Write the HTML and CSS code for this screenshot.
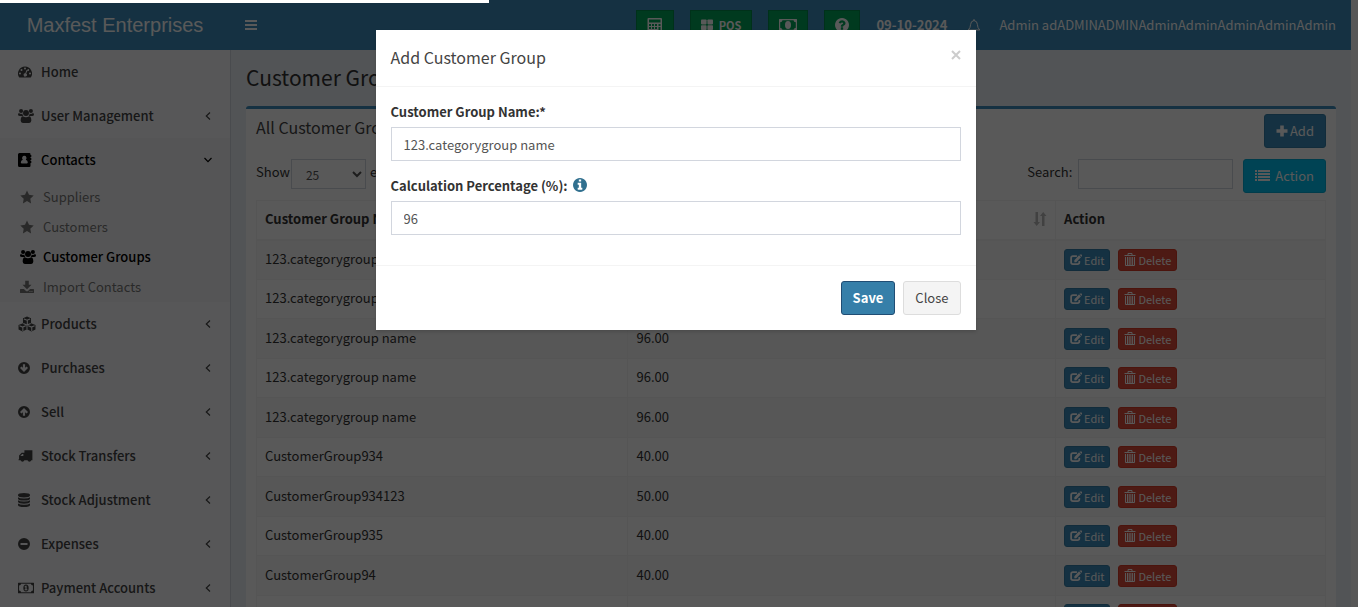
FILE: index.html
```html
<!DOCTYPE html>
<html lang="en">
<head>
<meta charset="utf-8">
<title>Customer Groups - Maxfest Enterprises</title>
<link rel="stylesheet" href="styles.css">
</head>
<body>
<svg class="sprite" aria-hidden="true">
  <symbol id="i-bars" viewBox="0 0 14 14"><path d="M1 2h12v2H1zM1 6h12v2H1zM1 10h12v2H1z"/></symbol>
  <symbol id="i-calc" viewBox="0 0 16 16"><path fill-rule="evenodd" d="M1.500 1h12.500q1 0 1 1v13q0 1-1 1H1.500q-1 0-1-1V2q0-1 1-1zM2 2.500v3h11.500v-3zM2 7v2h2V7zM5 7v2h2V7zM8 7v2h2V7zM11.500 7v2h2V7zM2 10v2h2v-2zM5 10v2h2v-2zM8 10v2h2v-2zM11.500 10v4.500h2V10zM2 13v1.500h2V13zM5 13v1.500h2V13zM8 13v1.500h2V13z"/></symbol>
  <symbol id="i-grid" viewBox="0 0 12 12"><rect y=".5" width="5.600" height="4.900" rx=".8"/><rect x="6.400" y=".5" width="5.600" height="4.900" rx=".8"/><rect y="6.200" width="5.600" height="4.900" rx=".8"/><rect x="6.400" y="6.200" width="5.600" height="4.900" rx=".8"/></symbol>
  <symbol id="i-money" viewBox="0 0 18 14"><path fill-rule="evenodd" d="M.5 1h17q.5 0 .5.500v11q0 .5-.5.500H.5q-.5 0-.5-.5v-11Q0 1 .5 1zM3.500 2.200Q3.300 4 1.200 4.300v5.400q2.100.3 2.300 2.100h11q.2-1.800 2.300-2.100V4.300q-2.100-.3-2.300-2.100z"/><ellipse cx="9" cy="7" rx="3" ry="4"/><path class="cut" d="M8.400 4.500h1.300V8.400h.8v1H7.500v-1h.8V6.200h-.9v-.8q.8-.2 1-.9z"/></symbol>
  <symbol id="i-question" viewBox="128 128 1536 1536"><path d="M1024 1376v-192q0-14-9-23t-23-9h-192q-14 0-23 9t-9 23v192q0 14 9 23t23 9h192q14 0 23-9t9-23zm256-672q0-88-55.500-163t-138.500-116-170-41q-243 0-371 213-15 24 8 42l132 100q7 6 19 6 16 0 25-12 53-68 86-92 34-24 86-24 48 0 85.500 26t37.500 59q0 38-20 61t-68 45q-63 28-115.500 86.500t-52.500 125.500v36q0 14 9 23t23 9h192q14 0 23-9t9-23q0-19 21.500-49.500t54.500-49.500q32-18 49-28.500t46-35 44.500-48 28-60.500 12.500-81zm384 192q0 209-103 385.500t-279.500 279.500-385.500 103-385.500-103-279.500-279.500-103-385.500 103-385.500 279.500-279.500 385.500-103 385.500 103 279.500 279.500 103 385.500z"/></symbol>
  <symbol id="i-info" viewBox="128 128 1536 1536"><path d="M1152 1376v-160q0-14-9-23t-23-9h-96v-512q0-14-9-23t-23-9h-320q-14 0-23 9t-9 23v160q0 14 9 23t23 9h96v320h-96q-14 0-23 9t-9 23v160q0 14 9 23t23 9h448q14 0 23-9t9-23zm-128-896v-160q0-14-9-23t-23-9h-192q-14 0-23 9t-9 23v160q0 14 9 23t23 9h192q14 0 23-9t9-23zm640 416q0 209-103 385.500t-279.500 279.500-385.500 103-385.500-103-279.500-279.500-103-385.500 103-385.500 279.500-279.500 385.500-103 385.500 103 279.500 279.500 103 385.500z"/></symbol>
  <symbol id="i-bell" viewBox="0 0 14 14"><path fill="none" stroke="currentColor" d="M7 1.500Q3.700 2 3.600 5.500 3.500 9 1.200 11h11.600Q10.500 9 10.400 5.500 10.300 2 7 1.500zM5.500 11.500Q5.800 13 7 13t1.500-1.500M7 0v2"/></symbol>
  <symbol id="i-dash" viewBox="0 0 14 14"><path fill-rule="evenodd" d="M7 1.500a7 7 0 0 1 5.900 10.800q-.2.200-.5.200H1.600q-.3 0-.5-.2A7 7 0 0 1 7 1.500zM2 7.500a1 1 0 1 0 0 2 1 1 0 0 0 0-2zM3.500 4a1 1 0 1 0 0 2 1 1 0 0 0 0-2zM7 2.500a1 1 0 1 0 0 2 1 1 0 0 0 0-2zM12 7.500a1 1 0 1 0 0 2 1 1 0 0 0 0-2zM10.300 4a1 1 0 0 0-.8 1.300L8.500 5 7.300 8.300a1.600 1.600 0 1 0 .9.300L9.500 5.800a1 1 0 1 0 .8-1.800z"/></symbol>
  <symbol id="i-users" viewBox="0 0 15 14"><circle cx="2.900" cy="2.400" r="1.900"/><circle cx="12.100" cy="2.400" r="1.900"/><circle cx="7.500" cy="4.200" r="2.800"/><path d="M1.300 4.500q1.600 1 2.800.2Q4.200 6.200 5 7H2Q0 7 0 5.500 0 4 1.300 4.500zM13.700 4.500q-1.600 1-2.800.2Q10.800 6.200 10 7h3q2 0 2-1.500 0-1.500-1.300-1zM4.500 7.200q3 1.800 6 0 2 .2 2 4 0 2.300-2 2.300h-6q-2 0-2-2.300 0-3.800 2-4z"/></symbol>
  <symbol id="i-book" viewBox="0 0 14 14"><path fill-rule="evenodd" d="M1.500 0h9.800q1.200 0 1.200 1.200V2h.8v2h-.8v1h.8v2h-.8v1h.8v2h-.8v2.800q0 1.200-1.200 1.200H1.500Q0 14 0 12.500v-11Q0 0 1.500 0zM6.300 2.800a2.200 2.300 0 0 0-1.500 4Q2.800 7.200 2.800 9.600q0 .8.800.8h5.400q.8 0 .8-.8 0-2.400-2-2.800a2.200 2.300 0 0 0-1.500-4z"/></symbol>
  <symbol id="i-star" viewBox="0 0 14 14"><path d="M7 .5l2 4.300 4.700.6-3.400 3.300.8 4.700L7 11.100l-4.100 2.300.8-4.700L.3 5.400 5 4.800z"/></symbol>
  <symbol id="i-download" viewBox="0 0 14 14"><path fill-rule="evenodd" d="M5.200.8h3.600v4h2.700L7 9.300 2.500 4.800h2.700zM.6 9h3.300L5.700 10.800q1.300 1 2.600 0L10.100 9h3.300q.6 0 .6.600v2.800q0 .6-.6.600H.6q-.6 0-.6-.6V9.600Q0 9 .6 9zM9.500 11v.9h.9V11zM11.500 11v.9h.9V11z"/></symbol>
  <symbol id="i-cubes" viewBox="0 0 17 14"><path d="M8.500 0l3.800 1.500v4.700L16.500 8v4.200L12.700 14 8.500 12 4.300 14 .5 12.200V8l4.200-1.800V1.500z"/><path class="cutline" d="M5.600 2.300l2.900 1.200 2.900-1.200M8.800 3.700v3.500M1.400 8.600l2.900 1.300 3-1.300M4.600 10v3.500M9.700 8.600l3 1.300 3-1.300M13 10v3.500M5 6.500l3.500 1.500L12 6.500M8.500 8v4"/></symbol>
  <symbol id="i-down" viewBox="0 0 14 14"><path fill-rule="evenodd" d="M6 1a6 6 0 1 1 0 12A6 6 0 0 1 6 1zM4.900 3.300v3.500L3.400 5.400 2 6.900l4 4 4-4-1.400-1.500-1.500 1.400V3.300z"/></symbol>
  <symbol id="i-up" viewBox="0 0 14 14"><path fill-rule="evenodd" d="M6 1a6 6 0 1 1 0 12A6 6 0 0 1 6 1zM4.900 10.700h2.200V7.200l1.500 1.400L10 7.100l-4-4-4 4 1.400 1.500 1.500-1.400z"/></symbol>
  <symbol id="i-minus" viewBox="0 0 14 14"><path fill-rule="evenodd" d="M6 1a6 6 0 1 1 0 12A6 6 0 0 1 6 1zM2.500 6v2h7V6z"/></symbol>
  <symbol id="i-truck" viewBox="0 0 15 14"><path fill-rule="evenodd" d="M6 1.500h7.500V11H12.500a1.900 1.900 0 0 1-3.600 0H6a1.900 1.900 0 0 1-3.600 0H.5v-.8l.5-.4V6.500L3.500 4H6zM2.200 7H5V5.200H3.900z"/></symbol>
  <symbol id="i-db" viewBox="0 0 14 14"><path d="M0 1.900Q.2 0 6 0t6 1.900v.7Q11.800 4.500 6 4.500T0 2.600zM0 4.200q1.500 1.300 6 1.300t6-1.300v1.500Q11.800 7.600 6 7.600T0 5.700zM0 7.300q1.500 1.300 6 1.300t6-1.300v1.500q-.2 1.900-6 1.900T0 8.800zM0 10.400q1.500 1.300 6 1.300t6-1.300v1.500Q11.800 14 6 14t-6-2.100z"/></symbol>
  <symbol id="i-left" viewBox="0 0 10 14"><path fill="none" stroke="currentColor" stroke-width="1.200" d="M7 3.500L3.300 7 7 10.500"/></symbol>
  <symbol id="i-chev" viewBox="0 0 10 14"><path fill="none" stroke="currentColor" stroke-width="1.200" d="M1.500 5L5 8.700 8.500 5"/></symbol>
  <symbol id="i-plus" viewBox="0 0 12 12"><path d="M4.200.5h3.600v3.700h3.700v3.600H7.800v3.700H4.200V7.800H.5V4.200h3.700z"/></symbol>
  <symbol id="i-list" viewBox="0 0 16 16"><path d="M0 2h2v2H0zM3 2h12v2H3zM0 5h2v2H0zM3 5h12v2H3zM0 8h2v2H0zM3 8h12v2H3zM0 11h2v2H0zM3 11h12v2H3z"/></symbol>
  <symbol id="i-sort" viewBox="0 0 14 14"><path d="M2.500 0h2.500v10h2l-3.300 4L.5 10h2zM9 14h2.500V4h2l-3.300-4L7 4h2z"/></symbol>
  <symbol id="i-edit" viewBox="0 0 13 12"><path fill="none" stroke="currentColor" stroke-width="1.900" d="M7.500 1.800H3.200Q1.200 1.800 1.200 3.800v4.700q0 2 2 2h4.900q2 0 2-2V7.200"/><path d="M4.700 8.500V6.200L9.800.9l2.100 2.100-5.200 5.500zM10.300.4l.4-.4h1.800l.5.600v1.300l-.6.600z"/></symbol>
  <symbol id="i-trash" viewBox="0 0 12 14"><path fill="none" stroke="currentColor" d="M.5 2.500h11M4 2.500v-2h4v2M1.500 4v8.500h9V4M3.500 4v8M5.200 4v8M6.900 4v8M8.600 4v8"/></symbol>
</svg>

<div class="page">
  <header class="topbar">
    <a class="brand" href="#">Maxfest Enterprises</a>
    <button class="toggle" aria-label="Toggle navigation"><svg class="ic"><use href="#i-bars"/></svg></button>
    <nav class="tools">
      <button class="tool" aria-label="Calculator"><svg class="ic16"><use href="#i-calc"/></svg></button>
      <button class="tool"><svg class="ic12"><use href="#i-grid"/></svg><span>POS</span></button>
      <button class="tool" aria-label="Today's profit"><svg class="ic18"><use href="#i-money"/></svg></button>
      <button class="tool" aria-label="Help"><svg class="ic"><use href="#i-question"/></svg></button>
      <strong class="date">09-10-2024</strong>
      <a class="bell" href="#" aria-label="Notifications"><svg class="ic"><use href="#i-bell"/></svg></a>
      <a class="user" href="#">Admin adADMINADMINAdminAdminAdminAdminAdmin</a>
    </nav>
  </header>

  <div class="main">
    <aside class="sidebar">
      <ul class="menu">
        <li><a class="item" href="#"><svg class="ic"><use href="#i-dash"/></svg>Home</a></li>
        <li><a class="item" href="#"><svg class="ic16"><use href="#i-users"/></svg>User Management<svg class="arrow"><use href="#i-left"/></svg></a></li>
        <li class="active"><a class="item" href="#"><svg class="ic"><use href="#i-book"/></svg>Contacts<svg class="arrow"><use href="#i-chev"/></svg></a>
          <ul class="submenu">
            <li><a href="#"><svg class="ic"><use href="#i-star"/></svg>Suppliers</a></li>
            <li><a href="#"><svg class="ic"><use href="#i-star"/></svg>Customers</a></li>
            <li><a class="current" href="#"><svg class="ic16"><use href="#i-users"/></svg>Customer Groups</a></li>
            <li><a href="#"><svg class="ic"><use href="#i-download"/></svg>Import Contacts</a></li>
          </ul>
        </li>
        <li><a class="item" href="#"><svg class="ic18"><use href="#i-cubes"/></svg>Products<svg class="arrow"><use href="#i-left"/></svg></a></li>
        <li><a class="item" href="#"><svg class="ic"><use href="#i-down"/></svg>Purchases<svg class="arrow"><use href="#i-left"/></svg></a></li>
        <li><a class="item" href="#"><svg class="ic"><use href="#i-up"/></svg>Sell<svg class="arrow"><use href="#i-left"/></svg></a></li>
        <li><a class="item" href="#"><svg class="ic16"><use href="#i-truck"/></svg>Stock Transfers<svg class="arrow"><use href="#i-left"/></svg></a></li>
        <li><a class="item" href="#"><svg class="ic"><use href="#i-db"/></svg>Stock Adjustment<svg class="arrow"><use href="#i-left"/></svg></a></li>
        <li><a class="item" href="#"><svg class="ic"><use href="#i-minus"/></svg>Expenses<svg class="arrow"><use href="#i-left"/></svg></a></li>
        <li><a class="item" href="#"><svg class="ic16"><use href="#i-money"/></svg>Payment Accounts<svg class="arrow"><use href="#i-left"/></svg></a></li>
      </ul>
    </aside>

    <main class="content">
      <h1>Customer Groups</h1>
      <section class="box">
        <div class="box-head">
          <h2>All Customer Groups</h2>
          <button class="btn primary"><svg class="ic12"><use href="#i-plus"/></svg>Add</button>
        </div>
        <div class="filters">
          <label class="show">Show <select><option>25</option><option>50</option></select> entries</label>
          <label class="search">Search: <input type="search"></label>
          <button class="btn cyan"><svg class="ic16"><use href="#i-list"/></svg>Action</button>
        </div>
        <table class="grid">
          <colgroup><col class="c-name"><col class="c-pct"><col class="c-act"></colgroup>
          <thead><tr><th>Customer Group Name</th><th><div class="th">Calculation Percentage (%)<svg class="ic"><use href="#i-sort"/></svg></div></th><th>Action</th></tr></thead>
          <tbody>
            <tr><td>123.categorygroup name</td><td>96.00</td><td><div class="acts"><button class="xs primary"><svg class="ic12"><use href="#i-edit"/></svg>Edit</button><button class="xs danger"><svg class="trash"><use href="#i-trash"/></svg>Delete</button></div></td></tr>
            <tr><td>123.categorygroup name</td><td>96.00</td><td><div class="acts"><button class="xs primary"><svg class="ic12"><use href="#i-edit"/></svg>Edit</button><button class="xs danger"><svg class="trash"><use href="#i-trash"/></svg>Delete</button></div></td></tr>
            <tr><td>123.categorygroup name</td><td>96.00</td><td><div class="acts"><button class="xs primary"><svg class="ic12"><use href="#i-edit"/></svg>Edit</button><button class="xs danger"><svg class="trash"><use href="#i-trash"/></svg>Delete</button></div></td></tr>
            <tr><td>123.categorygroup name</td><td>96.00</td><td><div class="acts"><button class="xs primary"><svg class="ic12"><use href="#i-edit"/></svg>Edit</button><button class="xs danger"><svg class="trash"><use href="#i-trash"/></svg>Delete</button></div></td></tr>
            <tr><td>123.categorygroup name</td><td>96.00</td><td><div class="acts"><button class="xs primary"><svg class="ic12"><use href="#i-edit"/></svg>Edit</button><button class="xs danger"><svg class="trash"><use href="#i-trash"/></svg>Delete</button></div></td></tr>
            <tr><td>CustomerGroup934</td><td>40.00</td><td><div class="acts"><button class="xs primary"><svg class="ic12"><use href="#i-edit"/></svg>Edit</button><button class="xs danger"><svg class="trash"><use href="#i-trash"/></svg>Delete</button></div></td></tr>
            <tr><td>CustomerGroup934123</td><td>50.00</td><td><div class="acts"><button class="xs primary"><svg class="ic12"><use href="#i-edit"/></svg>Edit</button><button class="xs danger"><svg class="trash"><use href="#i-trash"/></svg>Delete</button></div></td></tr>
            <tr><td>CustomerGroup935</td><td>40.00</td><td><div class="acts"><button class="xs primary"><svg class="ic12"><use href="#i-edit"/></svg>Edit</button><button class="xs danger"><svg class="trash"><use href="#i-trash"/></svg>Delete</button></div></td></tr>
            <tr><td>CustomerGroup94</td><td>40.00</td><td><div class="acts"><button class="xs primary"><svg class="ic12"><use href="#i-edit"/></svg>Edit</button><button class="xs danger"><svg class="trash"><use href="#i-trash"/></svg>Delete</button></div></td></tr>
            <tr><td></td><td></td><td><div class="acts"><button class="xs primary"><svg class="ic12"><use href="#i-edit"/></svg>Edit</button><button class="xs danger"><svg class="trash"><use href="#i-trash"/></svg>Delete</button></div></td></tr>
          </tbody>
        </table>
      </section>
    </main>
  </div>
</div>

<div class="overlay">
  <form class="modal" role="dialog" aria-labelledby="dlg-title">
    <div class="modal-head">
      <h3 id="dlg-title">Add Customer Group</h3>
      <button type="button" class="close" aria-label="Dismiss"><svg class="ic10" viewBox="0 0 10 10"><path fill="none" stroke="currentColor" stroke-width="2" d="M1 1l8 8M9 1l-8 8"/></svg></button>
    </div>
    <div class="modal-body">
      <label for="group-name">Customer Group Name:*</label>
      <input id="group-name" type="text" value="123.categorygroup name">
      <label for="group-pct">Calculation Percentage (%): <svg class="ic info"><use href="#i-info"/></svg></label>
      <input id="group-pct" type="text" value="96">
    </div>
    <div class="modal-foot">
      <button type="button" class="btn save">Save</button>
      <button type="button" class="btn default">Close</button>
    </div>
  </form>
</div>
<div class="progress"></div>
</body>
</html>
```
FILE: styles.css
```css
* { box-sizing: border-box; }
body, h1, h2, h3, ul { margin: 0; padding: 0; }
body {
  height: 100vh;
  overflow: hidden;
  position: relative;
  padding-right: 7px;
  background: #fafafa;
  color: #333;
  font-family: "Noto Sans CJK SC", "Open Sans", sans-serif;
  font-size: 13px;
  line-height: 20px;
}
ul { list-style: none; }
a { color: inherit; text-decoration: none; }
button, input, select { font: inherit; color: inherit; }
button { cursor: pointer; }
svg { fill: currentColor; flex: none; }
.sprite { position: absolute; width: 0; height: 0; }
.ic { width: 14px; height: 14px; }
.ic10 { width: 10px; height: 10px; }
.ic12 { width: 12px; height: 12px; }
.ic16 { width: 16px; height: 16px; }
.ic18 { width: 18px; height: 16px; }
.trash { width: 12px; height: 14px; }

.page { height: 100%; display: flex; flex-direction: column; overflow: hidden; }
.main { flex: 1; display: flex; min-height: 0; }

.topbar { display: flex; height: 50px; flex: none; background: #3c8dbc; color: #fff; }
.brand {
  width: 230px;
  font: 20px/50px "Liberation Sans", Arial, sans-serif;
  text-align: center;
}
.toggle { background: none; border: 0; padding: 0 14px; display: flex; align-items: center; }
.tools { margin-left: auto; display: flex; padding: 10px 15px 0 0; }
.tool {
  display: flex;
  align-items: center;
  justify-content: center;
  gap: 6px;
  height: 30px;
  padding: 0 10px;
  margin-right: 16px;
  background: #00a65a;
  border: 1px solid #008d4c;
  color: #fff;
  font-size: 11px;
  font-weight: 700;
}
.tool .cut { fill: #00a65a; }
.date { line-height: 30px; }
.bell { padding: 8px 0 0 20px; }
.user { padding-left: 18px; line-height: 30px; }

.sidebar { width: 231px; flex: none; background: #f9fafc; border-right: 1px solid #d2d6de; overflow: hidden; }
.item {
  display: flex;
  align-items: center;
  height: 44px;
  padding: 0 17px 0 18px;
  color: #444;
  font-weight: 500;
}
.item svg:first-child { margin-right: 7px; }
.item .ic:first-child { margin-right: 9px; }
.item .ic18:first-child { margin-right: 5px; }
.item .arrow { width: 10px; height: 14px; margin-left: auto; }
.cut { fill: #f9fafc; }
.cutline { fill: none; stroke: #f9fafc; stroke-width: 1; }
.active { background: #f4f4f5; }
.active .item { color: #000; }
.submenu a { display: flex; align-items: center; gap: 9px; height: 30px; padding-left: 20px; color: #777; }
.submenu .current { color: #000; font-weight: 500; gap: 7px; }

.content { flex: 1; min-width: 0; background: #ecf0f5; padding: 14px 15px 0; overflow: hidden; }
h1 { font-size: 21px; line-height: 26px; font-weight: 400; }
.box { margin-top: 16px; background: #fff; border-top: 3px solid #3c8dbc; border-radius: 3px; padding: 5px 10px; }
.box-head, .filters { display: flex; }
.box-head { justify-content: space-between; }
h2 { font-size: 16px; line-height: 26px; font-weight: 400; color: #444; }
.btn {
  display: flex;
  align-items: center;
  justify-content: center;
  height: 34px;
  padding: 0 11px;
  border: 1px solid;
  border-radius: 3px;
}
.primary { background: #3c8dbc; border-color: #367fa9; color: #fff; }
.danger { background: #dd4b39; border-color: #d73925; color: #fff; }
.cyan { background: #00c0ef; border-color: #00acd6; color: #fff; gap: 4px; margin-left: 10px; }
.btn.primary { gap: 2px; }
.filters { margin-top: 11px; }
.show, .search { line-height: 26px; display: flex; gap: 1px; }
.search { margin-left: auto; gap: 6px; }
.filters select, .search input { height: 30px; background: #fff; border: 1px solid #d2d6de; border-radius: 0; }
.filters select { width: 75px; padding: 0 10px; margin-right: 3px; color: #555; font-size: 12px; }
.search input { width: 155px; }

.grid { width: 100%; margin-top: 7px; border-collapse: collapse; table-layout: fixed; }
.c-name { width: 34.75%; }
.c-pct { width: 40%; }
.c-act { width: 25.25%; }
.grid th, .grid td { border: 1px solid #f4f4f4; padding: 0 8px; text-align: left; vertical-align: middle; }
.grid th { height: 39px; padding-bottom: 2px; border-bottom-width: 2px; font-weight: 700; }
.grid td:not(:last-child) { padding-bottom: 2px; }
.th { display: flex; justify-content: space-between; align-items: center; }
.th svg { color: #bbb; }
.grid tbody tr { height: 39px; }
.grid tbody tr:nth-child(odd) { height: 40px; background: #f9f9f9; }
.acts { display: flex; gap: 8px; }
.xs {
  display: flex;
  align-items: center;
  gap: 2px;
  height: 22px;
  padding: 0 5px;
  border: 1px solid;
  border-radius: 3px;
  font-size: 11px;
}
.xs.primary { border-color: #367fa9; }
.xs.danger { border-color: #d73925; }

.overlay {
  position: absolute;
  inset: 0;
  padding: 30px 7px 0 0;
  background: rgba(0, 0, 0, 0.65);
}
.modal { max-width: 600px; margin: 0 auto; background: #fff; box-shadow: 0 2px 3px rgba(0, 0, 0, 0.13); }
.modal-head { display: flex; justify-content: space-between; padding: 15px; height: 57px; border-bottom: 1px solid #f4f4f4; }
h3 { font-size: 16px; line-height: 24px; font-weight: 400; color: #444; }
.close { border: 0; background: none; padding: 0; height: 20px; color: #ccc; display: flex; align-items: center; }
.modal-body { padding: 15px 15px 30px; display: flex; flex-direction: column; }
.modal-body label { display: flex; gap: 5px; font-weight: 700; line-height: 20px; margin-bottom: 5px; }
.modal-body input { height: 34px; padding: 0 12px; border: 1px solid #d2d6de; color: #555; }
.modal-body input + label { margin-top: 15px; }
.info { color: #31708f; margin-top: 2px; }
.modal-foot { display: flex; justify-content: flex-end; gap: 8px; padding: 15px; border-top: 1px solid #f4f4f4; }
.save { background: #367fa9; border-color: #204d74; color: #fff; font-weight: 700; }
.default { background: #f4f4f4; border-color: #ddd; color: #444; }
.progress { position: absolute; top: 0; left: 0; width: 36%; height: 3px; background: #fff; }
```
